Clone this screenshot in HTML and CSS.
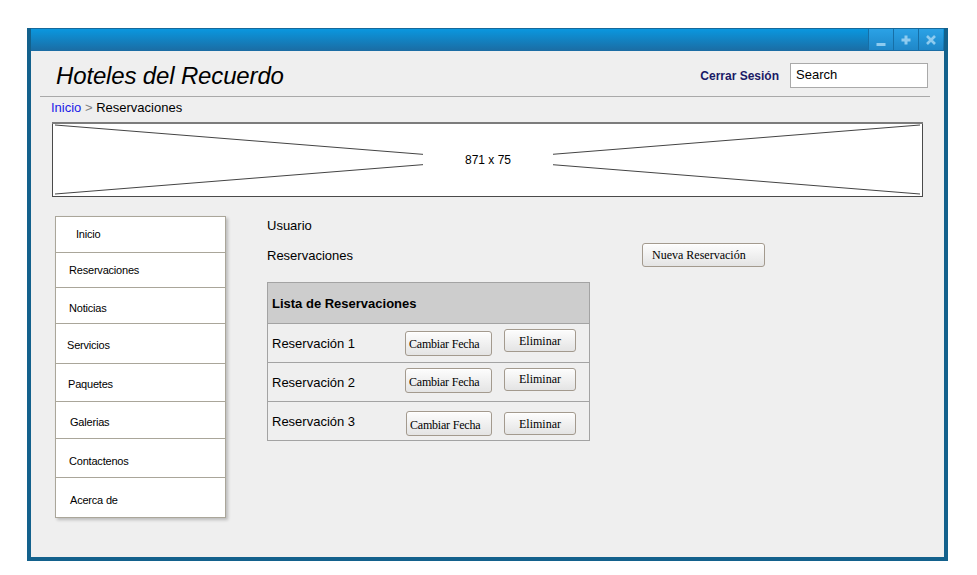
FILE: index.html
```html
<!DOCTYPE html>
<html lang="es">
<head>
<meta charset="utf-8">
<title>Hoteles del Recuerdo</title>
<link rel="stylesheet" href="styles.css">
</head>
<body>
<div class="window">
  <div class="titlebar">
    <span class="tb-btn"><svg width="10" height="10" viewBox="0 0 10 10"><rect x="0.5" y="6" width="9" height="3" fill="#8ecbef"/></svg></span>
    <span class="tb-btn"><svg width="10" height="10" viewBox="0 0 10 10"><path d="M3.5 0.5h3v3h3v3h-3v3h-3v-3h-3v-3h3z" fill="#8ecbef"/></svg></span>
    <span class="tb-btn"><svg width="10" height="10" viewBox="0 0 10 10"><path d="M1 1L9 9M9 1L1 9" stroke="#8ecbef" stroke-width="2.6"/></svg></span>
  </div>
  <div class="content">
    <header class="header">
      <h1 class="title">Hoteles del Recuerdo</h1>
      <div class="header-right">
        <a class="logout">Cerrar Sesión</a>
        <div class="search">Search</div>
      </div>
    </header>
    <nav class="crumbs"><a class="crumb-link">Inicio</a> <span class="sep">&gt;</span> Reservaciones</nav>
    <div class="banner">
      <svg width="871" height="75" viewBox="0 0 871 75">
        <rect x="0.5" y="0.5" width="870" height="74" fill="#fff" stroke="#4a4a4a"/>
        <line x1="0" y1="1" x2="871" y2="1" stroke="#7c7c7c" stroke-width="2"/>
        <line x1="3" y1="3" x2="868" y2="72" stroke="#444" stroke-width="1"/>
        <line x1="3" y1="72" x2="868" y2="3" stroke="#444" stroke-width="1"/>
        <rect x="371" y="26" width="130" height="24" fill="#fff"/>
        <text x="436" y="42" text-anchor="middle" class="banner-text">871 x 75</text>
      </svg>
    </div>
    <div class="body">
      <ul class="sidenav">
        <li class="nav-item">Inicio</li>
        <li class="nav-item">Reservaciones</li>
        <li class="nav-item">Noticias</li>
        <li class="nav-item">Servicios</li>
        <li class="nav-item">Paquetes</li>
        <li class="nav-item">Galerias</li>
        <li class="nav-item">Contactenos</li>
        <li class="nav-item">Acerca de</li>
      </ul>
      <main class="main">
        <div class="user">Usuario</div>
        <div class="res-row">
          <span class="res-label">Reservaciones</span>
          <button class="btn btn-new">Nueva Reservación</button>
        </div>
        <div class="list">
          <div class="list-head">Lista de Reservaciones</div>
          <div class="list-row">
            <span class="row-label">Reservación 1</span>
            <button class="btn btn-date">Cambiar Fecha</button>
            <button class="btn btn-del up2">Eliminar</button>
          </div>
          <div class="list-row">
            <span class="row-label">Reservación 2</span>
            <button class="btn btn-date up1">Cambiar Fecha</button>
            <button class="btn btn-del up3">Eliminar</button>
          </div>
          <div class="list-row">
            <span class="row-label">Reservación 3</span>
            <button class="btn btn-date down2 nudge">Cambiar Fecha</button>
            <button class="btn btn-del down2">Eliminar</button>
          </div>
        </div>
      </main>
    </div>
  </div>
</div>
</body>
</html>
```

FILE: styles.css
```css
html, body {
  margin: 0;
  padding: 0;
  background: #ffffff;
  font-family: "Liberation Sans", Arial, sans-serif;
  color: #000;
}

.window {
  margin: 28px 0 0 27px;
  width: 913px;
  height: 529px;
  border: 4px solid #13618c;
  border-top: 0;
  background: #efefef;
  display: flex;
  flex-direction: column;
}

.titlebar {
  height: 23px;
  flex: 0 0 23px;
  box-sizing: border-box;
  border-top: 1px solid #16699b;
  background: linear-gradient(#0a97df, #1b6ca3);
  display: flex;
  justify-content: flex-end;
  padding-right: 1px;
}

.tb-btn {
  width: 24px;
  height: 21px;
  border-left: 1px solid #176fa6;
  background: linear-gradient(#2ba2e6, #1f87c8);
  display: flex;
  align-items: center;
  justify-content: center;
}

.tb-btn:first-child svg {
  margin-top: 5px;
}

.content {
  flex: 1;
  display: flex;
  flex-direction: column;
}

.header {
  display: flex;
  align-items: flex-start;
  height: 45px;
  margin: 0 14px 0 9px;
  border-bottom: 1px solid #a9a9a9;
}

.title {
  margin: 11px 0 0 16px;
  font-size: 24px;
  line-height: 28px;
  font-style: italic;
  font-weight: normal;
  letter-spacing: -0.15px;
}

.header-right {
  margin: 10px 2px 0 auto;
  display: flex;
  align-items: center;
  gap: 11px;
}

.logout {
  font-size: 12px;
  font-weight: bold;
  color: #1a1a66;
  line-height: 25px;
  padding-top: 3px;
}

.search {
  width: 138px;
  height: 25px;
  box-sizing: border-box;
  border: 1px solid #a9a9a9;
  background: #fff;
  font-size: 13px;
  line-height: 21px;
  padding: 0 5px;
}

.crumbs {
  margin: 3px 0 0 20px;
  font-size: 13px;
  line-height: 15px;
}

.crumb-link {
  color: #2020e8;
}

.sep {
  color: #808080;
}

.banner {
  margin: 7px 0 0 21px;
  width: 871px;
  height: 75px;
}

.banner svg {
  display: block;
}

.banner-text {
  font-family: "Liberation Sans", Arial, sans-serif;
  font-size: 12px;
  fill: #000;
}

.body {
  display: flex;
  align-items: flex-start;
  margin: 19px 0 0 24px;
}

.sidenav {
  list-style: none;
  margin: 0;
  padding: 0;
  width: 171px;
  box-sizing: border-box;
  border: 1px solid #aaa69a;
  background: #fff;
  box-shadow: 2px 2px 3px rgba(0, 0, 0, 0.22);
}

.nav-item {
  box-sizing: border-box;
  font-size: 11px;
  line-height: 13px;
  letter-spacing: -0.2px;
  border-top: 1px solid #aaa69a;
}

.nav-item:nth-child(1) { border-top: 0; height: 35px; padding: 11px 0 0 20px; }
.nav-item:nth-child(2) { height: 35px; padding: 11px 0 0 13px; }
.nav-item:nth-child(3) { height: 36px; padding: 14px 0 0 13px; }
.nav-item:nth-child(4) { height: 40px; padding: 15px 0 0 11px; }
.nav-item:nth-child(5) { height: 38px; padding: 14px 0 0 12px; }
.nav-item:nth-child(6) { height: 37px; padding: 14px 0 0 14px; }
.nav-item:nth-child(7) { height: 39px; padding: 16px 0 0 13px; }
.nav-item:nth-child(8) { height: 40px; padding: 16px 0 0 14px; }

.main {
  margin-left: 41px;
  display: flex;
  flex-direction: column;
}

.user {
  font-size: 13px;
  line-height: 20px;
}

.res-row {
  display: flex;
  align-items: center;
  margin-top: 7px;
  height: 24px;
}

.res-label {
  flex: 0 0 375px;
  font-size: 13px;
  line-height: 15px;
  padding-top: 1px;
}

.btn {
  font-family: "Liberation Serif", "Times New Roman", serif;
  font-size: 12px;
  color: #000;
  border: 1px solid #a39a8e;
  border-radius: 3px;
  background: linear-gradient(#fdfdfd, #e4e4e4);
  box-shadow: inset 0 1px 0 #ffffff;
  box-sizing: border-box;
  padding: 0;
  margin: 0;
  line-height: 14px;
}

.btn-new {
  width: 123px;
  height: 24px;
  text-align: left;
  padding-left: 9px;
}

.list {
  margin-top: 15px;
  width: 323px;
  box-sizing: border-box;
  border: 1px solid #a3a3a3;
}

.list-head {
  height: 41px;
  box-sizing: border-box;
  background: #cdcdcd;
  border-bottom: 1px solid #a3a3a3;
  font-size: 13px;
  font-weight: bold;
  display: flex;
  align-items: center;
  padding-left: 4px;
}

.list-row {
  height: 39px;
  box-sizing: border-box;
  border-bottom: 1px solid #a3a3a3;
  display: flex;
  align-items: center;
  padding-left: 4px;
}

.list-row:last-child {
  border-bottom: 0;
  height: 38px;
}

.row-label {
  flex: 0 0 133px;
  font-size: 13px;
  line-height: 15px;
}

.btn-date {
  width: 87px;
  height: 25px;
  text-align: left;
  padding-left: 3px;
  padding-top: 2px;
  letter-spacing: -0.2px;
}

.btn-del {
  width: 72px;
  height: 23px;
  margin-left: 12px;
}

.up1 { margin-bottom: 3px; }
.up2 { margin-bottom: 5px; }
.up3 { margin-bottom: 6px; }
.down2 { margin-top: 5px; }
.nudge { margin-left: 1px; width: 86px; }
```
